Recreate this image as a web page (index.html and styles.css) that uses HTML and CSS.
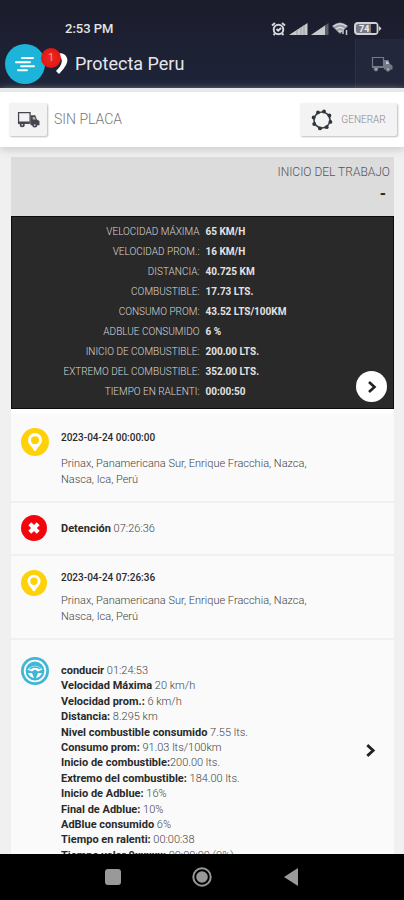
FILE: index.html
```html
<!DOCTYPE html>
<html lang="es">
<head>
<meta charset="utf-8">
<meta name="viewport" content="width=device-width, initial-scale=1">
<title>Protecta Peru</title>
<link rel="stylesheet" href="styles.css">
</head>
<body>
<svg class="sprite">
  <symbol id="truck" viewBox="0 0 22 16">
    <path d="M1.500 1.500h11v10h-11z" fill="none" stroke="currentColor" stroke-width="1.200"/>
    <path d="M1 10h11v2H1zM13 4h4.500l1.500 4 2.500 1.500v4H13z" fill="currentColor"/>
    <path d="M15 5.500h2l1 2.500h-3z" fill="#fff" fill-opacity=".6"/>
    <circle cx="5" cy="13" r="2.400" fill="currentColor"/><circle cx="17" cy="13.300" r="2.400" fill="currentColor"/>
    <circle cx="5" cy="13" r=".8" fill="#ddd"/><circle cx="17" cy="13.300" r=".8" fill="#ddd"/>
  </symbol>
  <symbol id="pin" viewBox="0 0 28 28">
    <circle cx="14" cy="14" r="14" fill="#ffd108"/>
    <path fill="#fff" fill-rule="evenodd" d="M14 5a7 7 0 0 0-7 7c0 4 4 6.500 6 10.500q1 1 2 0c2-4 6-6.500 6-10.500a7 7 0 0 0-7-7zm0 3.200a4 4 0 1 1 0 8 4 4 0 0 1 0-8z"/>
  </symbol>
  <symbol id="chevron" viewBox="0 0 10 14">
    <path d="M2 2l5.500 5L2 12" fill="none" stroke="currentColor" stroke-width="2.600"/>
  </symbol>
</svg>
<header class="top">
  <div class="status">
    <time>2:53 PM</time>
    <div class="indicators">
      <svg width="15" height="14" viewBox="0 0 15 14" fill="none" stroke="#d6d6da" stroke-width="2"><circle cx="7.500" cy="7.500" r="4.800"/><path d="M1 3.500L4 1M14 3.500L11 1M5.500 7l1.700 1.700L10 6M4 11.500L2.500 13M11 11.500l1.500 1.500"/></svg>
      <svg width="19" height="12" viewBox="0 0 19 12"><path d="M0 12L18.500 0v12z" fill="#c8c8cd"/><path d="M8 7v5M12 4v8M15 2v10" stroke="#999aa3"/></svg>
      <svg width="18" height="12" viewBox="0 0 18 12"><path d="M0 12L17.500 0v12z" fill="#5b5d69"/><path d="M0 12L14 2.400V12z" fill="#c8c8cd"/></svg>
      <svg width="17" height="13" viewBox="0 0 17 13"><path d="M0 4q8-7 16 0l-8 8z" fill="#9b9da7"/><path d="M1.500 4.300q6.500-5 13 0M4 7q4-3 8 0M6.500 9.500q1.500-1 3 0" fill="none" stroke="#dcdce0" stroke-width="1.300"/><path d="M11 8v4M14.500 8v5" stroke="#c8c8cd" stroke-width="1.500"/></svg>
      <svg class="battery" width="28" height="13" viewBox="0 0 28 13"><rect x="1" y="1" width="22.500" height="11" rx="3" fill="#777984" stroke="#d3d3d7" stroke-width="2"/><path d="M17 2h5.500v9H17z" fill="#20222f"/><path d="M25 4l2.500 2.500L25 9z" fill="#d3d3d7"/><text x="5" y="10">74</text></svg>
    </div>
  </div>
  <div class="appbar">
    <button class="menu" aria-label="Menú">
      <svg width="22" height="16" viewBox="0 0 22 16" stroke="#fff" stroke-width="2" stroke-linecap="round"><path d="M8 2h11M2 6.300H16M7 10.200h13M4 14.200h9"/></svg>
      <span class="badge">1</span>
    </button>
    <svg class="logo" width="16" height="24" viewBox="0 0 16 24"><path d="M2 1.500C12-1 17 6 13 13q-2 4-7 9l-3-3Q11 11 8 6z" fill="#fff"/></svg>
    <h1>Protecta Peru</h1>
    <button class="vehicle" aria-label="Vehículos"><svg width="22" height="16"><use href="#truck"/></svg></button>
  </div>
</header>
<section class="toolbar">
  <button class="raised plate" aria-label="Vehículo"><svg width="23" height="17"><use href="#truck"/></svg></button>
  <span class="plate-name">SIN PLACA</span>
  <button class="raised generate">
    <svg width="22" height="22" viewBox="0 0 22 22" fill="none" stroke="#3d4148"><circle cx="11" cy="11" r="8" stroke-width="1.600"/><g fill="#30343c" stroke="none"><circle cx="13" cy="2.500" r="1.900"/><circle cx="7" cy="3.400" r="1.900"/><circle cx="2.600" cy="8.500" r="1.900"/><circle cx="3.200" cy="15" r="1.900"/><circle cx="9" cy="19.400" r="1.900"/><circle cx="15.700" cy="18.200" r="1.900"/><circle cx="19.400" cy="12.900" r="1.900"/><circle cx="18.400" cy="6.400" r="1.900"/></g></svg>
    GENERAR
  </button>
</section>
<main>
  <section class="start"><h2>INICIO DEL TRABAJO</h2><strong>-</strong></section>
  <section class="summary">
    <dl>
      <dt>VELOCIDAD MÁXIMA</dt><dd>65 KM/H</dd>
      <dt>VELOCIDAD PROM.:</dt><dd>16 KM/H</dd>
      <dt>DISTANCIA:</dt><dd>40.725 KM</dd>
      <dt>COMBUSTIBLE:</dt><dd>17.73 LTS.</dd>
      <dt>CONSUMO PROM:</dt><dd>43.52 LTS/100KM</dd>
      <dt>ADBLUE CONSUMIDO</dt><dd>6 %</dd>
      <dt>INICIO DE COMBUSTIBLE:</dt><dd>200.00 LTS.</dd>
      <dt>EXTREMO DEL COMBUSTIBLE:</dt><dd>352.00 LTS.</dd>
      <dt>TIEMPO EN RALENTI:</dt><dd>00:00:50</dd>
    </dl>
    <button class="next" aria-label="Siguiente"><svg width="10" height="14"><use href="#chevron"/></svg></button>
  </section>
  <ul class="events">
    <li class="place">
      <svg class="icon" viewBox="0 0 28 28"><use href="#pin"/></svg>
      <div><time>2023-04-24 00:00:00</time><p>Prinax, Panamericana Sur, Enrique Fracchia, Nazca, Nasca, Ica, Perú</p></div>
    </li>
    <li class="stop">
      <svg class="icon small" viewBox="0 0 28 28"><circle cx="14" cy="14" r="14" fill="#f3050c"/><path d="M9.500 9.500l9 9M18.500 9.500l-9 9" stroke="#fff" stroke-width="4.500"/></svg>
      <div><b>Detención</b> 07:26:36</div>
    </li>
    <li class="place again">
      <svg class="icon small" viewBox="0 0 28 28"><use href="#pin"/></svg>
      <div><time>2023-04-24 07:26:36</time><p>Prinax, Panamericana Sur, Enrique Fracchia, Nazca, Nasca, Ica, Perú</p></div>
    </li>
    <li class="drive">
      <svg class="icon" viewBox="0 0 28 28"><circle cx="14" cy="14" r="14" fill="#42b6d6"/><circle cx="14" cy="14" r="10.300" fill="#42b6d6" stroke="#fff" stroke-width="1.800"/><path d="M6.500 12.500Q14 5 21.500 12.500L17 14.500q-3-2.500-6 0z" fill="#fff"/><path d="M8.500 12q5.500-4 11 0" fill="none" stroke="#42b6d6" stroke-width="1.500"/><path d="M7 16h4l2 5q-4-.5-6-5zM21 16h-4l-2 5q4-.5 6-5z" fill="#fff"/><circle cx="14" cy="14.500" r="1.700" fill="#42b6d6"/></svg>
      <div>
        <b>conducir</b> 01:24:53<br>
        <b>Velocidad Máxima</b> 20 km/h<br>
        <b>Velocidad prom.:</b> 6 km/h<br>
        <b>Distancia:</b> 8.295 km<br>
        <b>Nivel combustible consumido</b> 7.55 lts.<br>
        <b>Consumo prom:</b> 91.03 lts/100km<br>
        <b>Inicio de combustible:</b>200.00 lts.<br>
        <b>Extremo del combustible:</b> 184.00 lts.<br>
        <b>Inicio de Adblue:</b> 16%<br>
        <b>Final de Adblue:</b> 10%<br>
        <b>AdBlue consumido</b> 6%<br>
        <b>Tiempo en ralenti:</b> 00:00:38<br>
        <b>Tiempo valor 0xxxxx:</b> 00:00:00 (0%)
      </div>
      <button class="open" aria-label="Ver detalle"><svg width="11" height="15"><use href="#chevron"/></svg></button>
    </li>
  </ul>
</main>
<nav class="system">
  <button aria-label="Recientes"><svg width="16" height="16"><rect width="16" height="16" rx="3" fill="#999"/></svg></button>
  <button aria-label="Inicio"><svg width="20" height="20" viewBox="0 0 20 20"><circle cx="10" cy="10" r="8.700" fill="none" stroke="#999" stroke-width="2"/><circle cx="10" cy="10" r="5.800" fill="#999"/></svg></button>
  <button aria-label="Atrás"><svg width="16" height="18"><path d="M15 0v18L1 9z" fill="#999"/></svg></button>
</nav>
</body>
</html>
```
FILE: styles.css
```css
* { box-sizing: border-box; }

body {
  margin: 0;
  height: 100vh;
  display: flex;
  flex-direction: column;
  overflow: hidden;
  background: #f0f0f0;
  color: #333;
  font: 10px/15px Roboto, sans-serif;
}

button {
  padding: 0;
  border: 0;
  background: none;
  color: inherit;
  font: inherit;
  display: flex;
  align-items: center;
  justify-content: center;
}

h1, h2, p, dl, dd, ul { margin: 0; padding: 0; }

.sprite { display: none; }

.top {
  flex: none;
  background: linear-gradient(#1b1c2b, #1e2439);
}

.status {
  height: 39px;
  padding: 18px 22px 0 65px;
  display: flex;
  justify-content: space-between;
  align-items: center;
  color: #e4e4e6;
  font-size: 13px;
  font-weight: 500;
}

.indicators {
  display: flex;
  align-items: center;
  gap: 3px;
}

.battery { margin-left: 2px; }
.battery text { font-size: 9px; font-weight: 700; fill: #eee; }

.appbar {
  height: 49px;
  padding-left: 5px;
  display: flex;
  align-items: center;
}

.menu {
  position: relative;
  width: 40px;
  height: 40px;
  border-radius: 50%;
  background: #1cb4d8;
}

.badge {
  position: absolute;
  top: 4px;
  right: -16px;
  width: 20px;
  height: 20px;
  border-radius: 50%;
  background: radial-gradient(#e92a22, #e0100c);
  color: #ff9a90;
  font-size: 11px;
  line-height: 20px;
}

.logo { margin-left: 8px; }

h1 {
  flex: 1;
  margin-left: 6px;
  color: #e6e7ea;
  font-size: 18px;
  font-weight: 400;
}

.vehicle {
  align-self: stretch;
  width: 49px;
  padding-left: 4px;
  background: #23273b;
  border-left: 1px solid #2b3044;
  color: #747887;
}

.toolbar {
  flex: none;
  height: 59px;
  padding: 0 7px 0 9px;
  display: flex;
  align-items: center;
  border-top: 4px solid #e6e9ea;
  background: #fff;
  box-shadow: 0 3px 8px #ccc;
  z-index: 1;
}

.raised {
  height: 33px;
  border-radius: 2px;
  background: #f3f3f4;
  box-shadow: 1px 1px 2px #bbb;
}

.plate { width: 38px; color: #454550; }

.plate-name {
  flex: 1;
  margin-left: 7px;
  color: #777;
  font-size: 14px;
  font-weight: 300;
}

.generate {
  width: 97px;
  gap: 8px;
  color: #888;
  font-weight: 300;
}

main {
  flex: 1;
  min-height: 0;
  overflow: hidden;
  padding: 10px 10px 0 11px;
}

.start {
  height: 59px;
  padding: 7px 4px;
  background: #dcdcdc;
  text-align: right;
}

h2 {
  color: #555;
  font-size: 12px;
  line-height: 16px;
  font-weight: 300;
}

.start strong {
  display: block;
  padding-right: 4px;
  color: #222;
  font-size: 16px;
  line-height: 28px;
}

.summary {
  position: relative;
  padding: 5px 0 6px;
  border: 1px solid #0c0c0c;
  background: #292929;
  color: #d8d8d8;
}

.summary dl {
  display: grid;
  grid-template-columns: 1fr 1fr;
  column-gap: 6px;
  line-height: 20px;
}

dt { text-align: right; font-weight: 300; }
dd { font-weight: 700; color: #e2e2e2; }

.next {
  position: absolute;
  right: 6px;
  bottom: 6px;
  width: 31px;
  height: 31px;
  border-radius: 50%;
  background: #fff;
  color: #222;
}

.events {
  list-style: none;
  background: #fafafa;
  border-top: 5px solid #fff;
}

.events li {
  display: flex;
  align-items: flex-start;
  gap: 12px;
  padding: 14px 18px 13px 10px;
  border-bottom: 2px solid #f0f0f0;
  color: #444;
  font-size: 11px;
  font-weight: 300;
}

.events .icon { flex: none; width: 28px; height: 28px; }
.events .small { width: 26px; height: 26px; margin-right: 2px; }
.events b, .events time { color: #2a2a2a; font-weight: 700; }
.events time { display: block; font-size: 10px; font-weight: 500; }
.events p { max-width: 250px; margin-top: 11px; line-height: 16px; }

.place div { padding-top: 2px; }
.events .again div { padding-top: 0; }
.events .again p { margin-top: 8px; }

.events .stop { align-items: center; padding-top: 12px; }

.events .drive { padding-top: 17px; }
.drive div { flex: 1; padding-top: 6px; line-height: 1.4; }

.open { align-self: center; padding-bottom: 20px; color: #222; }

.system {
  flex: none;
  height: 46px;
  padding: 0 105px;
  display: flex;
  align-items: center;
  justify-content: space-between;
  background: #000;
  z-index: 1;
}
```
